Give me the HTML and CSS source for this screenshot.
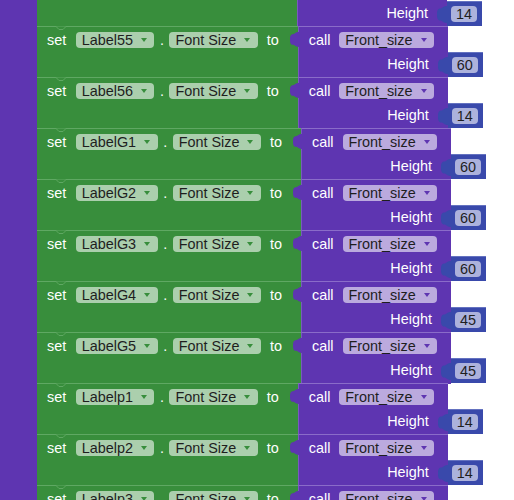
FILE: index.html
```html
<!DOCTYPE html>
<html lang="en">
<head>
    <meta charset="UTF-8">
    <title>Font size blocks</title>
    <link rel="stylesheet" href="styles.css">
</head>
<body>
<div class="canvas">
    <div class="strip"></div>
    <div class="stack">
        <div class="row">
            <div class="set blank"></div>
            <div class="call">
                <svg class="tab" width="9" height="15" viewBox="0 0 9 17" preserveAspectRatio="none"><path d="M9,0 C5,0 5,2.5 3,2.5 C0.5,2.5 0,5 0,8.5 C0,12 0.5,14.5 3,14.5 C5,14.5 5,17 9,17 Z"/></svg>
                <div class="line blank"></div>
                <div class="arg">Height</div>
            </div>
            <div class="num">
                <svg class="tab" width="10" height="17" viewBox="0 0 9 17" preserveAspectRatio="none"><path d="M9,0 C5,0 5,2.5 3,2.5 C0.5,2.5 0,5 0,8.5 C0,12 0.5,14.5 3,14.5 C5,14.5 5,17 9,17 Z"/></svg>
                <span class="numpill">14</span>
            </div>
        </div>
        <div class="row">
            <div class="set">
                <svg class="notch" width="18" height="5" viewBox="0 0 18 5"><polyline points="0,0.5 4,0.5 7,3.5 11,3.5 14,0.5 18,0.5"/></svg>
                <span class="word">set</span>
                <span class="pill">Label55<i class="arrow"></i></span>
                <span class="dot">.</span>
                <span class="pill">Font Size<i class="arrow"></i></span>
                <span class="word to">to</span>
            </div>
            <div class="call">
                <svg class="tab" width="9" height="15" viewBox="0 0 9 17" preserveAspectRatio="none"><path d="M9,0 C5,0 5,2.5 3,2.5 C0.5,2.5 0,5 0,8.5 C0,12 0.5,14.5 3,14.5 C5,14.5 5,17 9,17 Z"/></svg>
                <div class="line"><span class="word">call</span><span class="pill">Front_size<i class="arrow"></i></span></div>
                <div class="arg">Height</div>
            </div>
            <div class="num">
                <svg class="tab" width="10" height="17" viewBox="0 0 9 17" preserveAspectRatio="none"><path d="M9,0 C5,0 5,2.5 3,2.5 C0.5,2.5 0,5 0,8.5 C0,12 0.5,14.5 3,14.5 C5,14.5 5,17 9,17 Z"/></svg>
                <span class="numpill">60</span>
            </div>
        </div>
        <div class="row">
            <div class="set">
                <svg class="notch" width="18" height="5" viewBox="0 0 18 5"><polyline points="0,0.5 4,0.5 7,3.5 11,3.5 14,0.5 18,0.5"/></svg>
                <span class="word">set</span>
                <span class="pill">Label56<i class="arrow"></i></span>
                <span class="dot">.</span>
                <span class="pill">Font Size<i class="arrow"></i></span>
                <span class="word to">to</span>
            </div>
            <div class="call">
                <svg class="tab" width="9" height="15" viewBox="0 0 9 17" preserveAspectRatio="none"><path d="M9,0 C5,0 5,2.5 3,2.5 C0.5,2.5 0,5 0,8.5 C0,12 0.5,14.5 3,14.5 C5,14.5 5,17 9,17 Z"/></svg>
                <div class="line"><span class="word">call</span><span class="pill">Front_size<i class="arrow"></i></span></div>
                <div class="arg">Height</div>
            </div>
            <div class="num">
                <svg class="tab" width="10" height="17" viewBox="0 0 9 17" preserveAspectRatio="none"><path d="M9,0 C5,0 5,2.5 3,2.5 C0.5,2.5 0,5 0,8.5 C0,12 0.5,14.5 3,14.5 C5,14.5 5,17 9,17 Z"/></svg>
                <span class="numpill">14</span>
            </div>
        </div>
        <div class="row">
            <div class="set">
                <svg class="notch" width="18" height="5" viewBox="0 0 18 5"><polyline points="0,0.5 4,0.5 7,3.5 11,3.5 14,0.5 18,0.5"/></svg>
                <span class="word">set</span>
                <span class="pill">LabelG1<i class="arrow"></i></span>
                <span class="dot">.</span>
                <span class="pill">Font Size<i class="arrow"></i></span>
                <span class="word to">to</span>
            </div>
            <div class="call">
                <svg class="tab" width="9" height="15" viewBox="0 0 9 17" preserveAspectRatio="none"><path d="M9,0 C5,0 5,2.5 3,2.5 C0.5,2.5 0,5 0,8.5 C0,12 0.5,14.5 3,14.5 C5,14.5 5,17 9,17 Z"/></svg>
                <div class="line"><span class="word">call</span><span class="pill">Front_size<i class="arrow"></i></span></div>
                <div class="arg">Height</div>
            </div>
            <div class="num">
                <svg class="tab" width="10" height="17" viewBox="0 0 9 17" preserveAspectRatio="none"><path d="M9,0 C5,0 5,2.5 3,2.5 C0.5,2.5 0,5 0,8.5 C0,12 0.5,14.5 3,14.5 C5,14.5 5,17 9,17 Z"/></svg>
                <span class="numpill">60</span>
            </div>
        </div>
        <div class="row">
            <div class="set">
                <svg class="notch" width="18" height="5" viewBox="0 0 18 5"><polyline points="0,0.5 4,0.5 7,3.5 11,3.5 14,0.5 18,0.5"/></svg>
                <span class="word">set</span>
                <span class="pill">LabelG2<i class="arrow"></i></span>
                <span class="dot">.</span>
                <span class="pill">Font Size<i class="arrow"></i></span>
                <span class="word to">to</span>
            </div>
            <div class="call">
                <svg class="tab" width="9" height="15" viewBox="0 0 9 17" preserveAspectRatio="none"><path d="M9,0 C5,0 5,2.5 3,2.5 C0.5,2.5 0,5 0,8.5 C0,12 0.5,14.5 3,14.5 C5,14.5 5,17 9,17 Z"/></svg>
                <div class="line"><span class="word">call</span><span class="pill">Front_size<i class="arrow"></i></span></div>
                <div class="arg">Height</div>
            </div>
            <div class="num">
                <svg class="tab" width="10" height="17" viewBox="0 0 9 17" preserveAspectRatio="none"><path d="M9,0 C5,0 5,2.5 3,2.5 C0.5,2.5 0,5 0,8.5 C0,12 0.5,14.5 3,14.5 C5,14.5 5,17 9,17 Z"/></svg>
                <span class="numpill">60</span>
            </div>
        </div>
        <div class="row">
            <div class="set">
                <svg class="notch" width="18" height="5" viewBox="0 0 18 5"><polyline points="0,0.5 4,0.5 7,3.5 11,3.5 14,0.5 18,0.5"/></svg>
                <span class="word">set</span>
                <span class="pill">LabelG3<i class="arrow"></i></span>
                <span class="dot">.</span>
                <span class="pill">Font Size<i class="arrow"></i></span>
                <span class="word to">to</span>
            </div>
            <div class="call">
                <svg class="tab" width="9" height="15" viewBox="0 0 9 17" preserveAspectRatio="none"><path d="M9,0 C5,0 5,2.5 3,2.5 C0.5,2.5 0,5 0,8.5 C0,12 0.5,14.5 3,14.5 C5,14.5 5,17 9,17 Z"/></svg>
                <div class="line"><span class="word">call</span><span class="pill">Front_size<i class="arrow"></i></span></div>
                <div class="arg">Height</div>
            </div>
            <div class="num">
                <svg class="tab" width="10" height="17" viewBox="0 0 9 17" preserveAspectRatio="none"><path d="M9,0 C5,0 5,2.5 3,2.5 C0.5,2.5 0,5 0,8.5 C0,12 0.5,14.5 3,14.5 C5,14.5 5,17 9,17 Z"/></svg>
                <span class="numpill">60</span>
            </div>
        </div>
        <div class="row">
            <div class="set">
                <svg class="notch" width="18" height="5" viewBox="0 0 18 5"><polyline points="0,0.5 4,0.5 7,3.5 11,3.5 14,0.5 18,0.5"/></svg>
                <span class="word">set</span>
                <span class="pill">LabelG4<i class="arrow"></i></span>
                <span class="dot">.</span>
                <span class="pill">Font Size<i class="arrow"></i></span>
                <span class="word to">to</span>
            </div>
            <div class="call">
                <svg class="tab" width="9" height="15" viewBox="0 0 9 17" preserveAspectRatio="none"><path d="M9,0 C5,0 5,2.5 3,2.5 C0.5,2.5 0,5 0,8.5 C0,12 0.5,14.5 3,14.5 C5,14.5 5,17 9,17 Z"/></svg>
                <div class="line"><span class="word">call</span><span class="pill">Front_size<i class="arrow"></i></span></div>
                <div class="arg">Height</div>
            </div>
            <div class="num">
                <svg class="tab" width="10" height="17" viewBox="0 0 9 17" preserveAspectRatio="none"><path d="M9,0 C5,0 5,2.5 3,2.5 C0.5,2.5 0,5 0,8.5 C0,12 0.5,14.5 3,14.5 C5,14.5 5,17 9,17 Z"/></svg>
                <span class="numpill">45</span>
            </div>
        </div>
        <div class="row">
            <div class="set">
                <svg class="notch" width="18" height="5" viewBox="0 0 18 5"><polyline points="0,0.5 4,0.5 7,3.5 11,3.5 14,0.5 18,0.5"/></svg>
                <span class="word">set</span>
                <span class="pill">LabelG5<i class="arrow"></i></span>
                <span class="dot">.</span>
                <span class="pill">Font Size<i class="arrow"></i></span>
                <span class="word to">to</span>
            </div>
            <div class="call">
                <svg class="tab" width="9" height="15" viewBox="0 0 9 17" preserveAspectRatio="none"><path d="M9,0 C5,0 5,2.5 3,2.5 C0.5,2.5 0,5 0,8.5 C0,12 0.5,14.5 3,14.5 C5,14.5 5,17 9,17 Z"/></svg>
                <div class="line"><span class="word">call</span><span class="pill">Front_size<i class="arrow"></i></span></div>
                <div class="arg">Height</div>
            </div>
            <div class="num">
                <svg class="tab" width="10" height="17" viewBox="0 0 9 17" preserveAspectRatio="none"><path d="M9,0 C5,0 5,2.5 3,2.5 C0.5,2.5 0,5 0,8.5 C0,12 0.5,14.5 3,14.5 C5,14.5 5,17 9,17 Z"/></svg>
                <span class="numpill">45</span>
            </div>
        </div>
        <div class="row">
            <div class="set">
                <svg class="notch" width="18" height="5" viewBox="0 0 18 5"><polyline points="0,0.5 4,0.5 7,3.5 11,3.5 14,0.5 18,0.5"/></svg>
                <span class="word">set</span>
                <span class="pill">Labelp1<i class="arrow"></i></span>
                <span class="dot">.</span>
                <span class="pill">Font Size<i class="arrow"></i></span>
                <span class="word to">to</span>
            </div>
            <div class="call">
                <svg class="tab" width="9" height="15" viewBox="0 0 9 17" preserveAspectRatio="none"><path d="M9,0 C5,0 5,2.5 3,2.5 C0.5,2.5 0,5 0,8.5 C0,12 0.5,14.5 3,14.5 C5,14.5 5,17 9,17 Z"/></svg>
                <div class="line"><span class="word">call</span><span class="pill">Front_size<i class="arrow"></i></span></div>
                <div class="arg">Height</div>
            </div>
            <div class="num">
                <svg class="tab" width="10" height="17" viewBox="0 0 9 17" preserveAspectRatio="none"><path d="M9,0 C5,0 5,2.5 3,2.5 C0.5,2.5 0,5 0,8.5 C0,12 0.5,14.5 3,14.5 C5,14.5 5,17 9,17 Z"/></svg>
                <span class="numpill">14</span>
            </div>
        </div>
        <div class="row">
            <div class="set">
                <svg class="notch" width="18" height="5" viewBox="0 0 18 5"><polyline points="0,0.5 4,0.5 7,3.5 11,3.5 14,0.5 18,0.5"/></svg>
                <span class="word">set</span>
                <span class="pill">Labelp2<i class="arrow"></i></span>
                <span class="dot">.</span>
                <span class="pill">Font Size<i class="arrow"></i></span>
                <span class="word to">to</span>
            </div>
            <div class="call">
                <svg class="tab" width="9" height="15" viewBox="0 0 9 17" preserveAspectRatio="none"><path d="M9,0 C5,0 5,2.5 3,2.5 C0.5,2.5 0,5 0,8.5 C0,12 0.5,14.5 3,14.5 C5,14.5 5,17 9,17 Z"/></svg>
                <div class="line"><span class="word">call</span><span class="pill">Front_size<i class="arrow"></i></span></div>
                <div class="arg">Height</div>
            </div>
            <div class="num">
                <svg class="tab" width="10" height="17" viewBox="0 0 9 17" preserveAspectRatio="none"><path d="M9,0 C5,0 5,2.5 3,2.5 C0.5,2.5 0,5 0,8.5 C0,12 0.5,14.5 3,14.5 C5,14.5 5,17 9,17 Z"/></svg>
                <span class="numpill">14</span>
            </div>
        </div>
        <div class="row">
            <div class="set">
                <svg class="notch" width="18" height="5" viewBox="0 0 18 5"><polyline points="0,0.5 4,0.5 7,3.5 11,3.5 14,0.5 18,0.5"/></svg>
                <span class="word">set</span>
                <span class="pill">Labelp3<i class="arrow"></i></span>
                <span class="dot">.</span>
                <span class="pill">Font Size<i class="arrow"></i></span>
                <span class="word to">to</span>
            </div>
            <div class="call">
                <svg class="tab" width="9" height="15" viewBox="0 0 9 17" preserveAspectRatio="none"><path d="M9,0 C5,0 5,2.5 3,2.5 C0.5,2.5 0,5 0,8.5 C0,12 0.5,14.5 3,14.5 C5,14.5 5,17 9,17 Z"/></svg>
                <div class="line"><span class="word">call</span><span class="pill">Front_size<i class="arrow"></i></span></div>
                <div class="arg">Height</div>
            </div>
            <div class="num">
                <svg class="tab" width="10" height="17" viewBox="0 0 9 17" preserveAspectRatio="none"><path d="M9,0 C5,0 5,2.5 3,2.5 C0.5,2.5 0,5 0,8.5 C0,12 0.5,14.5 3,14.5 C5,14.5 5,17 9,17 Z"/></svg>
                <span class="numpill">14</span>
            </div>
        </div>
    </div>
</div>
</body>
</html>
```

FILE: styles.css
```css
body {
    margin: 0;
    background: #fff;
    font-family: "Liberation Sans", Arial, sans-serif;
    font-size: 14.4px;
    overflow: hidden;
}
.canvas {
    display: flex;
    height: 500px;
    overflow: hidden;
}
.strip {
    width: 37px;
    flex: none;
    background: #5e35b1;
}
.stack {
    display: flex;
    flex-direction: column;
    margin-top: -24px;
}
.row {
    display: flex;
    height: 51px;
    flex: none;
}
.word {
    color: #fff;
    line-height: 16px;
    white-space: nowrap;
}
.set {
    position: relative;
    display: flex;
    align-items: flex-start;
    padding: 5px 19px 0 10px;
    background: #388e3c;
    border-top: 1px solid #5fa863;
    margin-top: -1px;
}
.set.blank {
    width: 260px;
    box-sizing: border-box;
}
.notch {
    position: absolute;
    top: -1px;
    left: 15px;
}
.notch polyline {
    fill: #388e3c;
    stroke: #5fa863;
    stroke-width: 1;
}
.pill {
    display: flex;
    align-items: center;
    height: 16px;
    line-height: 16px;
    padding: 0 7.5px 0 6px;
    border-radius: 4px;
    background: rgba(255, 255, 255, 0.58);
    color: #1e1e1e;
    white-space: nowrap;
}
.set .word:first-of-type {
    margin-right: 9.5px;
}
.dot {
    color: #fff;
    line-height: 16px;
    margin: 0 5.5px;
}
.to {
    margin-left: 9px;
}
.arrow {
    width: 0;
    height: 0;
    margin-left: 8px;
    border-left: 3px solid transparent;
    border-right: 3px solid transparent;
    border-top: 4px solid #388e3c;
}
.call .arrow {
    border-top-color: #5e35b1;
}
.call {
    position: relative;
    width: 150px;
    flex: none;
    box-sizing: border-box;
    padding: 5px 19px 0 10px;
    background: #5e35b1;
    border-top: 1px solid #8a6cc9;
    border-left: 1px solid #7a58c0;
    margin-top: -1px;
}
.call .tab {
    position: absolute;
    left: -9px;
    top: 5px;
}
.call .tab path {
    fill: #5e35b1;
}
.line {
    display: flex;
    align-items: flex-start;
}
.line.blank {
    height: 16px;
}
.line .word {
    margin-right: 9px;
}
.arg {
    margin-top: 8px;
    text-align: right;
    color: #fff;
    line-height: 16px;
}
.num {
    position: relative;
    align-self: flex-start;
    margin-top: 25px;
    height: 25px;
    box-sizing: border-box;
    padding: 4px 5px 0 4px;
    background: #3949ab;
    border-top: 1px solid #6472c0;
}
.num .tab {
    position: absolute;
    left: -10px;
    top: 4px;
}
.num .tab path {
    fill: #3949ab;
}
.numpill {
    display: block;
    height: 16px;
    line-height: 16px;
    padding: 0 5px;
    border-radius: 4px;
    background: rgba(255, 255, 255, 0.58);
    color: #1e1e1e;
}
```
